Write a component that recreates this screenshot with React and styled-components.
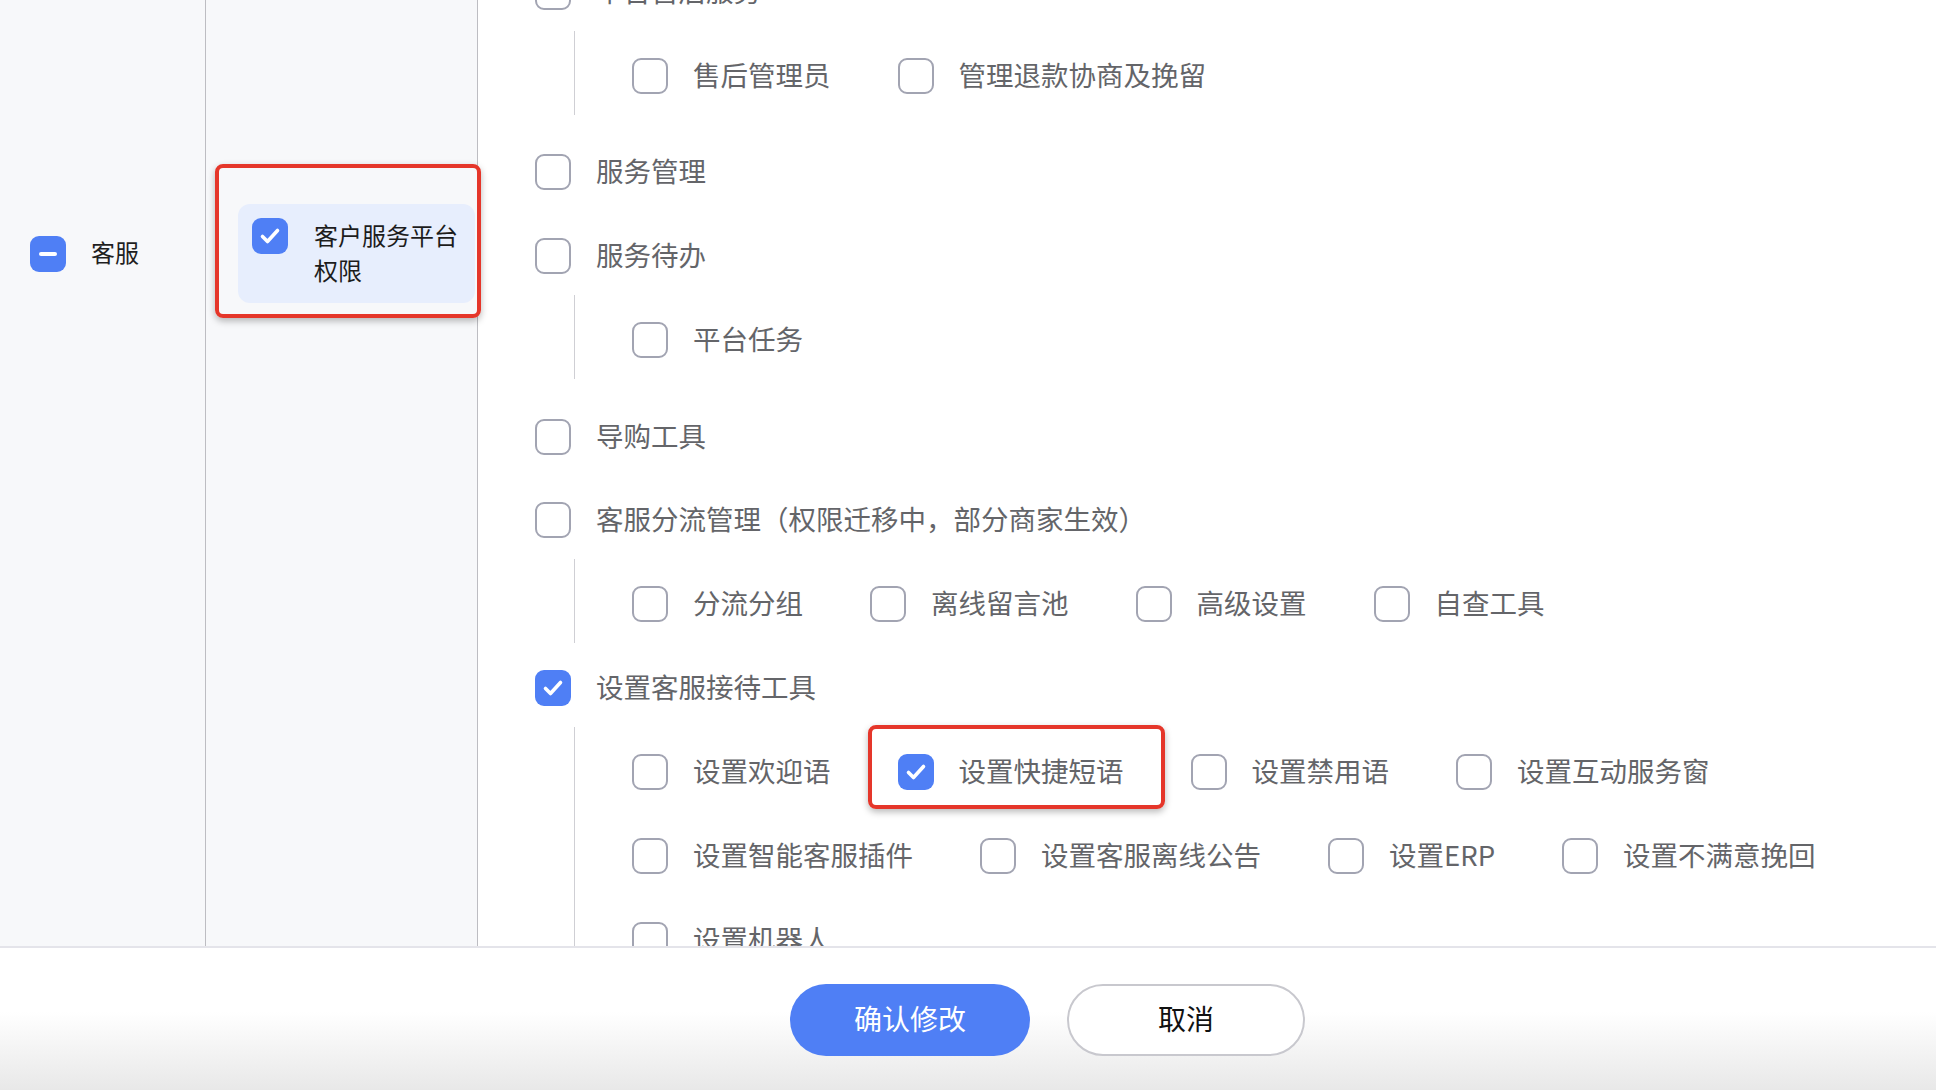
import React from "react";
import styled, { createGlobalStyle } from "styled-components";

const Global = createGlobalStyle`
  html, body { margin: 0; padding: 0; background: #fff; }
  body { font-family: "Noto Sans CJK SC", "Noto Sans", sans-serif; }
  * { box-sizing: border-box; }
`;

const Page = styled.div`
  width: 1936px;
  height: 1090px;
  display: flex;
  flex-direction: column;
  overflow: hidden;
`;

const Main = styled.div`
  height: 946px;
  display: flex;
  flex: none;
`;

const Column = styled.div`
  flex: none;
  width: ${(p) => p.$w}px;
  background: #f7f8fa;
  border-right: 1px solid #bdbdc2;
  padding-top: ${(p) => p.$top}px;
  padding-left: ${(p) => p.$left}px;
`;

const RootRow = styled.div`
  display: flex;
  align-items: center;
  gap: 25px;
  height: 36px;
  font-size: 24px;
  color: #1f1f1f;
`;

const RootText = styled.span`
  line-height: 36px;
  margin-top: -4px;
`;

const TreeItem = styled.div`
  position: relative;
  width: 237px;
  display: flex;
  align-items: flex-start;
  gap: 26px;
  padding: 14px 0 16px 14px;
  border-radius: 12px;
  background: #e7eefd;
`;

const TreeText = styled.span`
  font-size: 24px;
  line-height: 35px;
  color: #1c1c1c;
  margin-top: -1px;
`;

const Highlight = styled.span`
  position: absolute;
  left: ${(p) => p.$l}px;
  top: ${(p) => p.$t}px;
  right: ${(p) => p.$r}px;
  bottom: ${(p) => p.$b}px;
  border: 4px solid #e5362a;
  border-radius: 8px;
  box-shadow: 0 3px 7px rgba(0, 0, 0, 0.28);
  pointer-events: none;
`;

const Panel = styled.div`
  flex: 1;
  overflow: hidden;
  background: #fff;
  padding-left: 57px;
`;

const Scroll = styled.div`
  margin-top: -26px;
`;

const Node = styled.div`
  margin-bottom: ${(p) => p.$after}px;
`;

const Option = styled.label`
  position: relative;
  display: flex;
  align-items: center;
  gap: 25px;
  height: 36px;
  font-size: 27.5px;
  color: #646569;
  white-space: nowrap;
`;

const OptionText = styled.span`
  line-height: 36px;
  margin-top: -4px;
`;

const Sub = styled.div`
  margin-top: 21px;
  margin-left: 39px;
  border-left: 1.5px solid #cfcfd4;
  padding: 27px 0 21px 57px;
  display: flex;
  flex-wrap: wrap;
  column-gap: 67px;
  row-gap: 48px;
`;

const Box = styled.span`
  flex: none;
  width: 36px;
  height: 36px;
  border-radius: 9px;
  display: flex;
  align-items: center;
  justify-content: center;
  background: ${(p) => (p.$state === "off" ? "#fff" : "#4f7ff5")};
  border: ${(p) => (p.$state === "off" ? "2px solid #a2a4b2" : "none")};
`;

const Dash = styled.span`
  width: 18px;
  height: 4px;
  border-radius: 2px;
  background: #fff;
`;

const Footer = styled.div`
  flex: 1;
  border-top: 2px solid #e4e4ea;
  background: linear-gradient(to bottom, #ffffff 0%, #ffffff 45%, #e8e8e8 100%);
  display: flex;
  justify-content: center;
  align-items: flex-start;
  gap: 37px;
  padding-top: 36px;
  padding-left: 159px;
`;

const Button = styled.button`
  width: ${(p) => (p.$primary ? 240 : 238)}px;
  height: 72px;
  border-radius: 36px;
  font-family: inherit;
  font-size: 28px;
  padding: 0 0 4px;
  cursor: pointer;
  background: ${(p) => (p.$primary ? "#4f7ff5" : "#fff")};
  color: ${(p) => (p.$primary ? "#fff" : "#111")};
  border: ${(p) => (p.$primary ? "none" : "2px solid #c8c8ce")};
`;

function Check({ state = "off" }) {
  return (
    <Box $state={state}>
      {state === "on" && (
        <svg width="36" height="36" viewBox="0 0 36 36">
          <polyline
            points="10.5,18.5 15.5,23.5 25.5,12.5"
            fill="none"
            stroke="#fff"
            strokeWidth="3.6"
            strokeLinecap="round"
            strokeLinejoin="round"
          />
        </svg>
      )}
      {state === "mixed" && <Dash />}
    </Box>
  );
}

function Item({ label, state, mark }) {
  return (
    <Option>
      <Check state={state} />
      <OptionText>{label}</OptionText>
      {mark && <Highlight $l={-30} $t={-29} $r={-41} $b={-19} />}
    </Option>
  );
}

const tree = [
  { label: "平台售后服务", after: 39, children: [{ label: "售后管理员" }, { label: "管理退款协商及挽留" }] },
  { label: "服务管理", after: 48 },
  { label: "服务待办", after: 40, children: [{ label: "平台任务" }] },
  { label: "导购工具", after: 47 },
  {
    label: "客服分流管理（权限迁移中，部分商家生效）",
    after: 27,
    children: [{ label: "分流分组" }, { label: "离线留言池" }, { label: "高级设置" }, { label: "自查工具" }],
  },
  {
    label: "设置客服接待工具",
    state: "on",
    after: 0,
    children: [
      { label: "设置欢迎语" },
      { label: "设置快捷短语", state: "on", mark: true },
      { label: "设置禁用语" },
      { label: "设置互动服务窗" },
      { label: "设置智能客服插件" },
      { label: "设置客服离线公告" },
      { label: "设置ERP" },
      { label: "设置不满意挽回" },
      { label: "设置机器人" },
    ],
  },
];

export default function App() {
  return (
    <Page>
      <Global />
      <Main>
        <Column $w={206} $top={236} $left={30}>
          <RootRow>
            <Check state="mixed" />
            <RootText>客服</RootText>
          </RootRow>
        </Column>
        <Column $w={272} $top={204} $left={32}>
          <TreeItem>
            <Check state="on" />
            <TreeText>客户服务平台权限</TreeText>
            <Highlight $l={-23} $t={-40} $r={-6} $b={-15} />
          </TreeItem>
        </Column>
        <Panel>
          <Scroll>
            {tree.map((n) => (
              <Node key={n.label} $after={n.after}>
                <Item label={n.label} state={n.state} />
                {n.children && (
                  <Sub>
                    {n.children.map((c) => (
                      <Item key={c.label} label={c.label} state={c.state} mark={c.mark} />
                    ))}
                  </Sub>
                )}
              </Node>
            ))}
          </Scroll>
        </Panel>
      </Main>
      <Footer>
        <Button $primary>确认修改</Button>
        <Button>取消</Button>
      </Footer>
    </Page>
  );
}
